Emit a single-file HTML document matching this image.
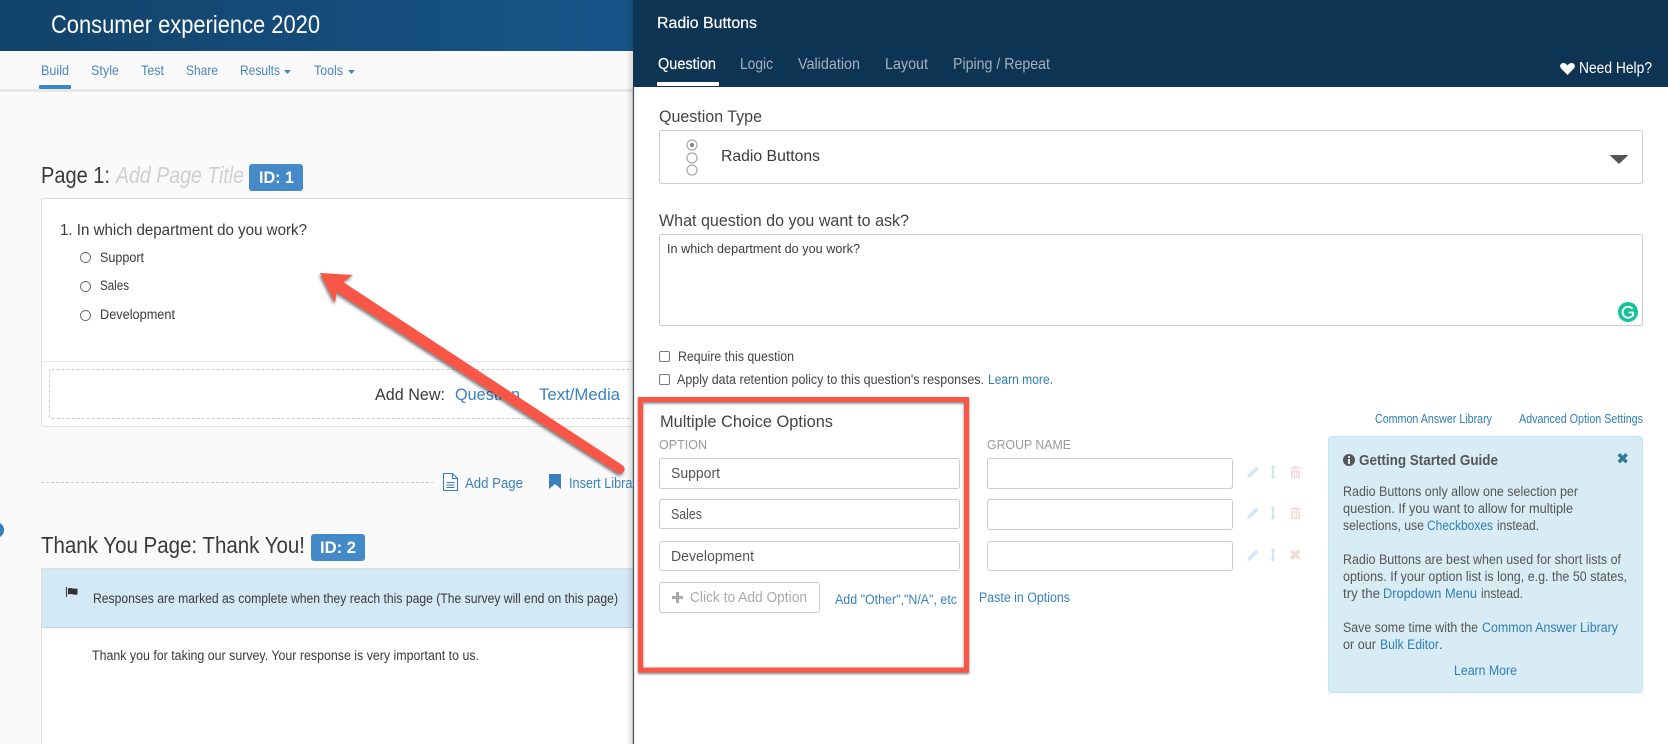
<!DOCTYPE html>
<html lang="en"><head><meta charset="utf-8"><title>Radio Buttons</title>
<style>
html,body{margin:0;padding:0;width:1668px;height:744px;overflow:hidden;background:#fafafa}
svg{display:block;filter:blur(.35px)}
text{font-family:"Liberation Sans",sans-serif;fill:#3a3a3a;font-size:13px}
.b{fill:#3a80bf}
.n{fill:#4a86bd;font-size:14px}
.t{fill:#a3b2c0;font-size:16px}
.g{fill:#555;font-size:13.500px}
.l{fill:#2f7fb5;font-size:13.500px}
.f{fill:none;stroke:#cbcbcb;stroke-width:1}
</style></head><body>
<svg xmlns="http://www.w3.org/2000/svg" width="1668" height="744" viewBox="0 0 1668 744">
<defs>
<linearGradient id="hd" x1="0" x2="1" y1="0" y2="0"><stop offset="0" stop-color="#12436a"/><stop offset="1" stop-color="#175589"/></linearGradient>
<linearGradient id="sh" x1="0" x2="1" y1="0" y2="0"><stop offset="0" stop-color="#000" stop-opacity="0"/><stop offset="1" stop-color="#000" stop-opacity=".14"/></linearGradient>
<filter id="ds" x="-10%" y="-10%" width="120%" height="120%"><feDropShadow dx="-1" dy="2" stdDeviation="1.6" flood-color="#000" flood-opacity=".55"/></filter>
<filter id="ds2" x="-5%" y="-5%" width="110%" height="110%"><feDropShadow dx="0" dy="1.5" stdDeviation="1.2" flood-color="#000" flood-opacity=".5"/></filter>
<g id="pen"><path d="M0 12l1-3.600 8-8 2.800 2.800-8 8z" fill="#d6e8f5"/></g>
<g id="arr"><path d="M0-7l2.600 3H1v8h1.600L0 7l-2.600-3H-1v-8h-1.600z" fill="#cfe4f2"/></g>
<g id="tr"><path d="M4 0h3l1 1.500h3V3H0V1.500h3zM1 4h9v8H1zM3 5.500v5h1v-5zM5 5.500v5h1v-5zM7 5.500v5h1v-5z" fill="#f3dedc" fill-rule="evenodd"/></g>
</defs>

<!-- Left: builder -->
<rect width="633" height="744" fill="#fafafa"/>
<rect width="633" height="51" fill="url(#hd)"/>
<text x="51" y="33" textLength="269" lengthAdjust="spacingAndGlyphs" style="font-size:25px;fill:#fff">Consumer experience 2020</text>
<rect x="0" y="89" width="633" height="3" fill="#e8e8e8"/>
<rect x="39" y="85" width="32" height="4" rx="1" fill="#3a87c7"/>
<text class="n" x="41" y="75" textLength="28" lengthAdjust="spacingAndGlyphs">Build</text>
<text class="n" x="91" y="75" textLength="28" lengthAdjust="spacingAndGlyphs">Style</text>
<text class="n" x="141" y="75" textLength="23" lengthAdjust="spacingAndGlyphs">Test</text>
<text class="n" x="186" y="75" textLength="32" lengthAdjust="spacingAndGlyphs">Share</text>
<text class="n" x="240" y="75" textLength="40" lengthAdjust="spacingAndGlyphs">Results</text>
<path d="M284 70h7l-3.500 4z" fill="#4a86bd"/>
<text class="n" x="314" y="75" textLength="29" lengthAdjust="spacingAndGlyphs">Tools</text>
<path d="M348 70h7l-3.500 4z" fill="#4a86bd"/>

<text x="41" y="183" textLength="69" lengthAdjust="spacingAndGlyphs" style="font-size:23px">Page 1:</text>
<text x="116" y="183" textLength="128" lengthAdjust="spacingAndGlyphs" style="font-size:23px;font-style:italic;fill:#cfcfcf">Add Page Title</text>
<rect x="249" y="164" width="54" height="27" rx="3" fill="#4489c8"/>
<text x="259" y="183" textLength="35" lengthAdjust="spacingAndGlyphs" style="font-size:16.500px;font-weight:bold;fill:#fff">ID: 1</text>

<rect x="41.500" y="198.500" width="600" height="228" rx="2" fill="#fff" stroke="#dedede"/>
<text x="60" y="235" textLength="247" lengthAdjust="spacingAndGlyphs" style="font-size:15.500px">1. In which department do you work?</text>
<circle cx="85.500" cy="257.500" r="5" fill="#fff" stroke="#666" stroke-width=".9"/>
<text x="100" y="262" textLength="44" lengthAdjust="spacingAndGlyphs" style="font-size:13.500px">Support</text>
<circle cx="85.500" cy="286.500" r="5" fill="#fff" stroke="#666" stroke-width=".9"/>
<text x="100" y="290" textLength="29" lengthAdjust="spacingAndGlyphs" style="font-size:13.500px">Sales</text>
<circle cx="85.500" cy="315.500" r="5" fill="#fff" stroke="#666" stroke-width=".9"/>
<text x="100" y="319" textLength="75" lengthAdjust="spacingAndGlyphs" style="font-size:13.500px">Development</text>
<rect x="41" y="361" width="600" height="1" fill="#e4e4e4"/>
<rect x="49.500" y="369.500" width="600" height="49" rx="2" fill="#fff" stroke="#ccc" stroke-dasharray="3 2"/>
<text x="375" y="400" textLength="70" lengthAdjust="spacingAndGlyphs" style="font-size:17px">Add New:</text>
<text class="b" x="455" y="400" textLength="65" lengthAdjust="spacingAndGlyphs" style="font-size:17px">Question</text>
<text class="b" x="539" y="400" textLength="81" lengthAdjust="spacingAndGlyphs" style="font-size:17px">Text/Media</text>

<path d="M41 482.500H433" stroke="#ccc" stroke-dasharray="3 2"/>
<path d="M443.500 473.500h9l5 5v12h-14zM452.500 473.500v5h5M446.500 482.500h8M446.500 485h8M446.500 487.500h8" fill="none" stroke="#3a80bf" stroke-width="1.100"/>
<text class="b" x="465" y="488" textLength="58" lengthAdjust="spacingAndGlyphs" style="font-size:15px">Add Page</text>
<path d="M549 474h12v15l-6-5-6 5z" fill="#3a80bf"/>
<text class="b" x="569" y="488" textLength="74" lengthAdjust="spacingAndGlyphs" style="font-size:15px">Insert Library</text>

<circle cx="-4" cy="530" r="8" fill="#2f7fc1"/>
<text x="41" y="553" textLength="264" lengthAdjust="spacingAndGlyphs" style="font-size:23px">Thank You Page: Thank You!</text>
<rect x="311" y="534" width="54" height="27" rx="3" fill="#4489c8"/>
<text x="320" y="553" textLength="36" lengthAdjust="spacingAndGlyphs" style="font-size:16.500px;font-weight:bold;fill:#fff">ID: 2</text>
<rect x="41.500" y="568.500" width="600" height="190" fill="#fff" stroke="#dedede"/>
<rect x="42" y="569" width="591" height="58" fill="#d4e9f6"/>
<rect x="42" y="627" width="591" height="1" fill="#bcd6e9"/>
<path d="M66 587h1v10h-1zM68 588.500c3-1.500 5 1 9.500 0v6c-4 1-6.500-1.500-9.500 0z" fill="#333"/>
<text x="93" y="603" textLength="525" lengthAdjust="spacingAndGlyphs" style="font-size:13.500px">Responses are marked as complete when they reach this page (The survey will end on this page)</text>
<text x="92" y="660" textLength="387" lengthAdjust="spacingAndGlyphs" style="font-size:13.500px">Thank you for taking our survey. Your response is very important to us.</text>

<!-- Right panel -->
<rect x="626" y="0" width="7" height="744" fill="url(#sh)"/>
<rect x="633" y="87" width="1035" height="657" fill="#fff"/>
<rect x="632.800" y="87" width="1.300" height="657" fill="#4c5160"/>
<rect x="634" y="0" width="1034" height="87" fill="#0e3454"/>
<rect x="633" y="0" width="1" height="87" fill="#1a3550"/>
<text x="657" y="28" textLength="100" lengthAdjust="spacingAndGlyphs" style="font-size:16px;fill:#fff;stroke:#fff;stroke-width:.2">Radio Buttons</text>
<text class="t" x="658" y="69" textLength="58" lengthAdjust="spacingAndGlyphs" style="fill:#fff;stroke:#fff;stroke-width:.2">Question</text>
<text class="t" x="740" y="69" textLength="33" lengthAdjust="spacingAndGlyphs">Logic</text>
<text class="t" x="798" y="69" textLength="62" lengthAdjust="spacingAndGlyphs">Validation</text>
<text class="t" x="885" y="69" textLength="43" lengthAdjust="spacingAndGlyphs">Layout</text>
<text class="t" x="953" y="69" textLength="97" lengthAdjust="spacingAndGlyphs">Piping / Repeat</text>
<rect x="657" y="82" width="62" height="4" fill="#fff"/>
<path d="M1567.500 75l-6.400-6.500c-2-2.200-.6-5.500 2.200-5.500 1.800 0 3.200 1 4.200 2.500 1-1.500 2.400-2.500 4.200-2.500 2.800 0 4.200 3.300 2.200 5.500z" fill="#fff"/>
<text x="1579" y="73" textLength="73" lengthAdjust="spacingAndGlyphs" style="font-size:15.500px;fill:#fff">Need Help?</text>

<text x="659" y="122" textLength="103" lengthAdjust="spacingAndGlyphs" style="font-size:17px;fill:#444">Question Type</text>
<rect class="f" x="659.500" y="130.500" width="983" height="53" rx="2"/>
<circle cx="692" cy="145" r="5" fill="none" stroke="#aaa" stroke-width="1.200"/><circle cx="692" cy="145" r="2.200" fill="#888"/>
<circle cx="692" cy="158" r="5" fill="none" stroke="#aaa" stroke-width="1.200"/>
<circle cx="692" cy="170" r="5" fill="none" stroke="#aaa" stroke-width="1.200"/>
<text x="721" y="161" textLength="99" lengthAdjust="spacingAndGlyphs" style="font-size:16px">Radio Buttons</text>
<path d="M1609.500 155h19l-9.500 9z" fill="#555"/>

<text x="659" y="226" textLength="250" lengthAdjust="spacingAndGlyphs" style="font-size:17px;fill:#444">What question do you want to ask?</text>
<rect class="f" x="659.500" y="234.500" width="983" height="91" rx="2"/>
<text x="667" y="253" textLength="193" lengthAdjust="spacingAndGlyphs" style="font-size:13px">In which department do you work?</text>
<circle cx="1628" cy="312" r="10" fill="#15c39a"/>
<path d="M1632.500 309a5.500 5.500 0 1 0 0 6.500M1628.500 312.500h4.500v4" fill="none" stroke="#fff" stroke-width="1.800"/>

<rect x="659.500" y="351.500" width="10" height="10" rx="1.500" fill="#fff" stroke="#777"/>
<text x="678" y="361" textLength="116" lengthAdjust="spacingAndGlyphs" style="font-size:13.500px;fill:#444">Require this question</text>
<rect x="659.500" y="374.500" width="10" height="10" rx="1.500" fill="#fff" stroke="#777"/>
<text x="677" y="384" textLength="307" lengthAdjust="spacingAndGlyphs" style="font-size:13.500px;fill:#444">Apply data retention policy to this question's responses.</text>
<text class="l" x="988" y="384" textLength="65" lengthAdjust="spacingAndGlyphs">Learn more.</text>

<!-- Options -->
<text x="660" y="427" textLength="173" lengthAdjust="spacingAndGlyphs" style="font-size:17px;fill:#444">Multiple Choice Options</text>
<text x="659" y="449" textLength="48" lengthAdjust="spacingAndGlyphs" style="font-size:13px;fill:#999">OPTION</text>
<rect class="f" x="659.500" y="458.500" width="300" height="30" rx="2.500"/>
<text x="671" y="478" textLength="49" lengthAdjust="spacingAndGlyphs" style="font-size:15px;fill:#555">Support</text>
<rect class="f" x="659.500" y="499.500" width="300" height="29" rx="2.500"/>
<text x="671" y="519" textLength="31" lengthAdjust="spacingAndGlyphs" style="font-size:15px;fill:#555">Sales</text>
<rect class="f" x="659.500" y="541.500" width="300" height="29" rx="2.500"/>
<text x="671" y="561" textLength="83" lengthAdjust="spacingAndGlyphs" style="font-size:15px;fill:#555">Development</text>
<rect class="f" x="659.500" y="582.500" width="160" height="30" rx="2.500"/>
<path d="M676 592h3v4h4v3h-4v4h-3v-4h-4v-3h4z" fill="#aaa"/>
<text x="690" y="602" textLength="117" lengthAdjust="spacingAndGlyphs" style="font-size:15px;fill:#aaa">Click to Add Option</text>
<text class="l" x="835" y="604" textLength="122" lengthAdjust="spacingAndGlyphs" style="fill:#3a80bf">Add "Other","N/A", etc</text>

<text x="987" y="449" textLength="84" lengthAdjust="spacingAndGlyphs" style="font-size:13px;fill:#999">GROUP NAME</text>
<rect class="f" x="987.500" y="458.500" width="245" height="30" rx="2.500"/>
<rect class="f" x="987.500" y="499.500" width="245" height="30" rx="2.500"/>
<rect class="f" x="987.500" y="541.500" width="245" height="29" rx="2.500"/>
<text class="l" x="979" y="602" textLength="91" lengthAdjust="spacingAndGlyphs" style="fill:#3a80bf">Paste in Options</text>

<use href="#pen" x="1247" y="466"/><use href="#arr" x="1273" y="472"/><use href="#tr" x="1290" y="466"/>
<use href="#pen" x="1247" y="507"/><use href="#arr" x="1273" y="513"/><use href="#tr" x="1290" y="507"/>
<use href="#pen" x="1247" y="549"/><use href="#arr" x="1273" y="555"/>
<path d="M1290 552l2.500-2.500 2.700 2.700 2.700-2.700 2.500 2.500-2.700 2.700 2.700 2.700-2.500 2.500-2.700-2.700-2.700 2.700-2.500-2.500 2.700-2.700z" fill="#eeddda"/>

<!-- Guide -->
<text class="l" x="1375" y="423" textLength="117" lengthAdjust="spacingAndGlyphs" style="font-size:12.500px">Common Answer Library</text>
<text class="l" x="1519" y="423" textLength="124" lengthAdjust="spacingAndGlyphs" style="font-size:12.500px">Advanced Option Settings</text>
<rect x="1328.500" y="436.500" width="314" height="256" rx="3" fill="#d8ecf6" stroke="#bfe5f2"/>
<circle cx="1349" cy="460" r="6" fill="#555"/>
<rect x="1348" y="459" width="2" height="5" fill="#d8ecf6"/><rect x="1348" y="456" width="2" height="2" fill="#d8ecf6"/>
<text x="1359" y="465" textLength="139" lengthAdjust="spacingAndGlyphs" style="font-size:15px;font-weight:bold;fill:#555">Getting Started Guide</text>
<path d="M1617.500 455.500l2.500-2.500 2.700 2.700 2.700-2.700 2.500 2.500-2.700 2.700 2.700 2.700-2.500 2.500-2.700-2.700-2.700 2.700-2.500-2.500 2.700-2.700z" fill="#2e7d95"/>
<text class="g" x="1343" y="496" textLength="235" lengthAdjust="spacingAndGlyphs">Radio Buttons only allow one selection per</text>
<text class="g" x="1343" y="513" textLength="230" lengthAdjust="spacingAndGlyphs">question. If you want to allow for multiple</text>
<text class="g" x="1343" y="530" textLength="81" lengthAdjust="spacingAndGlyphs">selections, use</text>
<text class="l" x="1427" y="530" textLength="66" lengthAdjust="spacingAndGlyphs">Checkboxes</text>
<text class="g" x="1497" y="530" textLength="42" lengthAdjust="spacingAndGlyphs">instead.</text>
<text class="g" x="1343" y="564" textLength="278" lengthAdjust="spacingAndGlyphs">Radio Buttons are best when used for short lists of</text>
<text class="g" x="1343" y="581" textLength="284" lengthAdjust="spacingAndGlyphs">options. If your option list is long, e.g. the 50 states,</text>
<text class="g" x="1343" y="598" textLength="37" lengthAdjust="spacingAndGlyphs">try the</text>
<text class="l" x="1383" y="598" textLength="94" lengthAdjust="spacingAndGlyphs">Dropdown Menu</text>
<text class="g" x="1481" y="598" textLength="42" lengthAdjust="spacingAndGlyphs">instead.</text>
<text class="g" x="1343" y="632" textLength="135" lengthAdjust="spacingAndGlyphs">Save some time with the</text>
<text class="l" x="1482" y="632" textLength="136" lengthAdjust="spacingAndGlyphs">Common Answer Library</text>
<text class="g" x="1343" y="649" textLength="33" lengthAdjust="spacingAndGlyphs">or our</text>
<text class="l" x="1380" y="649" textLength="59" lengthAdjust="spacingAndGlyphs">Bulk Editor</text>
<text class="g" x="1439" y="649">.</text>
<text class="l" x="1454" y="675" textLength="63" lengthAdjust="spacingAndGlyphs">Learn More</text>

<!-- Annotations -->
<rect x="640.500" y="399.500" width="326" height="270.500" fill="none" stroke="#fa5647" stroke-width="5" filter="url(#ds2)"/>
<path d="M320 273L353 275L343 282L622.500 465.200A4.500 4.500 0 0 1 617.500 472.800L336.500 292L335 303Z" fill="#fa5647" filter="url(#ds)"/>
</svg>
</body></html>
